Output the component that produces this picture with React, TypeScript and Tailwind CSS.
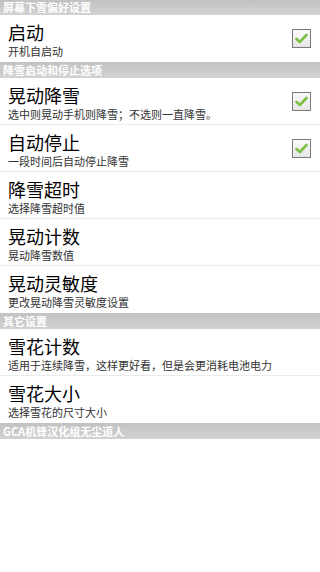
import React from 'react';

type Pref = {
  title: string;
  desc: string;
  checked?: boolean;
};

type Section = {
  header: string;
  items: Pref[];
};

const sections: Section[] = [
  {
    header: '屏幕下雪偏好设置',
    items: [{ title: '启动', desc: '开机自启动', checked: true }],
  },
  {
    header: '降雪启动和停止选项',
    items: [
      { title: '晃动降雪', desc: '选中则晃动手机则降雪；不选则一直降雪。', checked: true },
      { title: '自动停止', desc: '一段时间后自动停止降雪', checked: true },
      { title: '降雪超时', desc: '选择降雪超时值' },
      { title: '晃动计数', desc: '晃动降雪数值' },
      { title: '晃动灵敏度', desc: '更改晃动降雪灵敏度设置' },
    ],
  },
  {
    header: '其它设置',
    items: [
      { title: '雪花计数', desc: '适用于连续降雪，这样更好看，但是会更消耗电池电力' },
      { title: '雪花大小', desc: '选择雪花的尺寸大小' },
    ],
  },
];

function SectionHeader({ text, first }: { text: string; first?: boolean }) {
  return (
    <div
      className={`${
        first ? 'h-[15px]' : 'h-[16px]'
      } flex items-center px-[3px] bg-gradient-to-b from-[#c2c2c2] to-[#d2d2d2] text-white text-[11px] font-bold leading-none`}
    >
      {text}
    </div>
  );
}

function CheckBox() {
  return (
    <div className="w-[19px] h-[19px] border border-[#7a7a7a] bg-gradient-to-b from-[#fafafa] to-[#e6e6e6] flex items-center justify-center">
      <svg width="13" height="11" viewBox="0 0 13 11">
        <path
          d="M1.5 6 L4.8 9 L11.5 2"
          fill="none"
          stroke="#7cc043"
          strokeWidth="2.6"
          strokeLinecap="round"
          strokeLinejoin="round"
        />
      </svg>
    </div>
  );
}

function PrefRow({ item, last }: { item: Pref; last: boolean }) {
  return (
    <div
      className={`h-[47px] flex items-center px-[8px] ${
        last ? '' : 'border-b border-[#ebebeb]'
      }`}
    >
      <div className="flex-1 min-w-0 self-start pt-[7px] flex flex-col">
        <div className="text-[18px] leading-[21px] text-black">{item.title}</div>
        <div className="mt-[1px] text-[11px] leading-[14px] text-[#333] whitespace-nowrap">{item.desc}</div>
      </div>
      {item.checked && (
        <div className="pr-[1px]">
          <CheckBox />
        </div>
      )}
    </div>
  );
}

export default function App() {
  return (
    <div
      className="w-[320px] h-[572px] bg-white overflow-hidden"
      style={{ fontFamily: '"Noto Sans CJK SC", "Noto Sans", sans-serif' }}
    >
      {sections.map((section, sIdx) => (
        <div key={sIdx}>
          <SectionHeader text={section.header} first={sIdx === 0} />
          {section.items.map((item, idx) => (
            <PrefRow key={idx} item={item} last={idx === section.items.length - 1} />
          ))}
        </div>
      ))}
      <SectionHeader text="GCA机锋汉化组无尘道人" />
    </div>
  );
}
